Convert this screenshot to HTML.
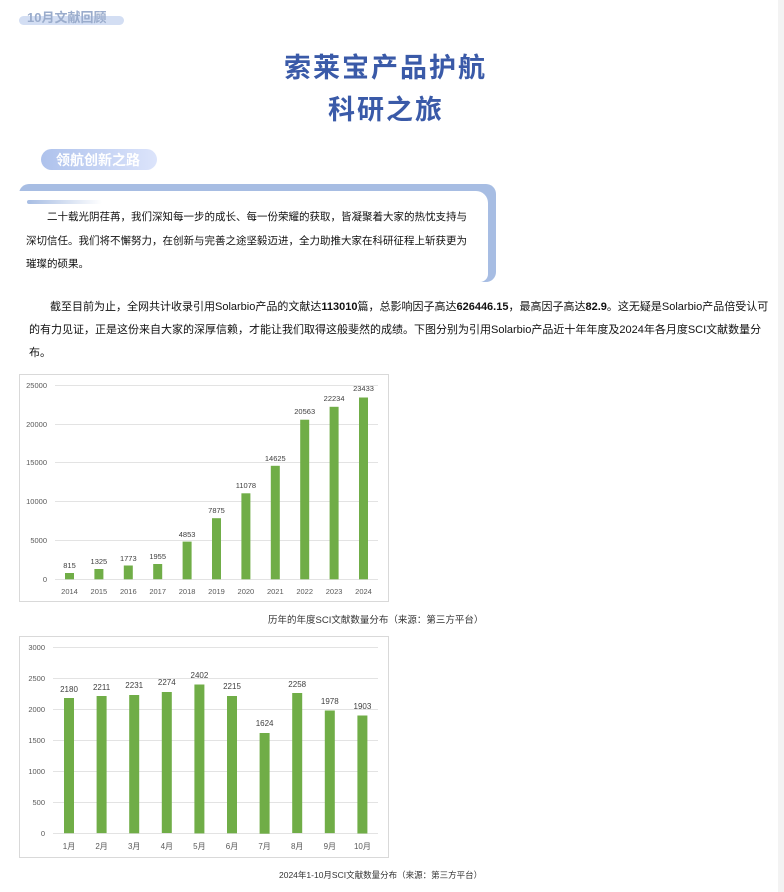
<!DOCTYPE html>
<html><head><meta charset="utf-8">
<style>
body{margin:0;width:784px;height:892px;background:#fff;position:relative;overflow:hidden;font-family:"Liberation Sans","Noto Sans CJK SC",sans-serif;}
.a{position:absolute;}
.p{font-size:11px;color:#111;line-height:23px;}
</style></head><body>
<div class="a" style="left:778px;top:0;width:6px;height:892px;background:#f3f3f3"></div>
<div class="a" style="left:19px;top:16px;width:105px;height:9px;border-radius:5px;background:#d3def3"></div>
<div class="a" style="left:27px;top:7px;font-size:13px;font-weight:bold;color:#9aaccc;">10月文献回顾</div>
<div class="a" style="left:284px;top:46px;font-size:27px;font-weight:bold;color:#3a5aa8;letter-spacing:2px">索莱宝产品护航</div>
<div class="a" style="left:328px;top:88px;font-size:27px;font-weight:bold;color:#3a5aa8;letter-spacing:2px">科研之旅</div>
<div class="a" style="left:41px;top:149px;width:116px;height:21px;border-radius:11px;background:linear-gradient(90deg,#aec2ec,#dce4fb)"></div>
<div class="a" style="left:56px;top:150px;font-size:14px;font-weight:bold;color:#fff">领航创新之路</div>
<div class="a" style="left:19px;top:184px;width:477px;height:98px;border-radius:10px;background:#a7bde3"></div>
<div class="a" style="left:19px;top:191px;width:469px;height:91px;border-radius:0 12px 8px 8px;background:#fff"></div>
<div class="a" style="left:27px;top:200px;width:75px;height:4px;border-radius:2px;background:linear-gradient(90deg,#a7bde3,#fff)"></div>
<div class="a p" style="left:26px;top:206px;width:446px;text-indent:21px;font-size:10.5px;line-height:23.5px">二十载光阴荏苒，我们深知每一步的成长、每一份荣耀的获取，皆凝聚着大家的热忱支持与深切信任。我们将不懈努力，在创新与完善之途坚毅迈进，全力助推大家在科研征程上斩获更为璀璨的硕果。</div>
<div class="a p" style="left:29px;top:296px;width:740px;text-indent:21px;font-size:11px">截至目前为止，全网共计收录引用Solarbio产品的文献达<b>113010</b>篇，总影响因子高达<b>626446.15</b>，最高因子高达<b>82.9</b>。这无疑是Solarbio产品倍受认可的有力见证，正是这份来自大家的深厚信赖，才能让我们取得这般斐然的成绩。下图分别为引用Solarbio产品近十年年度及2024年各月度SCI文献数量分布。</div>

<svg class="a" style="left:0;top:0" width="784" height="892" font-family="Liberation Sans, Noto Sans CJK SC, sans-serif">
<rect x="19.5" y="374.5" width="369" height="227" fill="#fff" stroke="#d9d9d9"/>
<g stroke="#e3e3e3" stroke-width="1">
<line x1="55" x2="378" y1="385.5" y2="385.5"/><line x1="55" x2="378" y1="424.5" y2="424.5"/><line x1="55" x2="378" y1="462.5" y2="462.5"/><line x1="55" x2="378" y1="501.5" y2="501.5"/><line x1="55" x2="378" y1="540.5" y2="540.5"/><line x1="55" x2="378" y1="579.5" y2="579.5"/>
</g>
<g font-size="7.5" fill="#595959" text-anchor="end">
<text x="47" y="388">25000</text><text x="47" y="427">20000</text><text x="47" y="465">15000</text><text x="47" y="504">10000</text><text x="47" y="543">5000</text><text x="47" y="582">0</text>
</g>
<g fill="#70ad47">
<rect x="65" y="573" width="9" height="6.3"/><rect x="94.4" y="569" width="9" height="10.3"/><rect x="123.8" y="565.5" width="9" height="13.8"/><rect x="153.2" y="564" width="9" height="15.2"/><rect x="182.6" y="541.6" width="9" height="37.7"/><rect x="212" y="518.2" width="9" height="61.1"/><rect x="241.4" y="493.3" width="9" height="86"/><rect x="270.8" y="465.8" width="9" height="113.5"/><rect x="300.2" y="419.7" width="9" height="159.6"/><rect x="329.6" y="406.8" width="9" height="172.5"/><rect x="359" y="397.5" width="9" height="181.8"/>
</g>
<g font-size="7.5" fill="#404040" text-anchor="middle">
<text x="69.5" y="568">815</text><text x="98.9" y="564">1325</text><text x="128.3" y="561">1773</text><text x="157.7" y="559">1955</text><text x="187.1" y="537">4853</text><text x="216.5" y="513">7875</text><text x="245.9" y="488">11078</text><text x="275.3" y="461">14625</text><text x="304.7" y="414">20563</text><text x="334.1" y="401">22234</text><text x="363.5" y="391">23433</text>
</g>
<g font-size="7.5" fill="#595959" text-anchor="middle">
<text x="69.5" y="594">2014</text><text x="98.9" y="594">2015</text><text x="128.3" y="594">2016</text><text x="157.7" y="594">2017</text><text x="187.1" y="594">2018</text><text x="216.5" y="594">2019</text><text x="245.9" y="594">2020</text><text x="275.3" y="594">2021</text><text x="304.7" y="594">2022</text><text x="334.1" y="594">2023</text><text x="363.5" y="594">2024</text>
</g>
<text x="268" y="623" font-size="9.5" fill="#333">历年的年度SCI文献数量分布（来源：第三方平台）</text>

<rect x="19.5" y="636.5" width="369" height="221" fill="#fff" stroke="#d9d9d9"/>
<g stroke="#e3e3e3">
<line x1="53" x2="378" y1="647.5" y2="647.5"/><line x1="53" x2="378" y1="678.5" y2="678.5"/><line x1="53" x2="378" y1="709.5" y2="709.5"/><line x1="53" x2="378" y1="740.5" y2="740.5"/><line x1="53" x2="378" y1="771.5" y2="771.5"/><line x1="53" x2="378" y1="802.5" y2="802.5"/><line x1="53" x2="378" y1="833.5" y2="833.5"/>
</g>
<g font-size="7.5" fill="#595959" text-anchor="end">
<text x="45" y="650">3000</text><text x="45" y="681">2500</text><text x="45" y="712">2000</text><text x="45" y="743">1500</text><text x="45" y="774">1000</text><text x="45" y="805">500</text><text x="45" y="836">0</text>
</g>
<g fill="#70ad47">
<rect x="64" y="698" width="10" height="135.2"/><rect x="96.6" y="696" width="10" height="137.1"/><rect x="129.2" y="695" width="10" height="138.3"/><rect x="161.8" y="692" width="10" height="141"/><rect x="194.4" y="684.5" width="10" height="148.9"/><rect x="227" y="696" width="10" height="137.3"/><rect x="259.6" y="733" width="10" height="100.7"/><rect x="292.2" y="693" width="10" height="140"/><rect x="324.8" y="710.5" width="10" height="122.6"/><rect x="357.4" y="715.5" width="10" height="118"/>
</g>
<g font-size="8" fill="#404040" text-anchor="middle">
<text x="69" y="692">2180</text><text x="101.6" y="690">2211</text><text x="134.2" y="688">2231</text><text x="166.8" y="685">2274</text><text x="199.4" y="678">2402</text><text x="232" y="689">2215</text><text x="264.6" y="726">1624</text><text x="297.2" y="687">2258</text><text x="329.8" y="704">1978</text><text x="362.4" y="709">1903</text>
</g>
<g font-size="8" fill="#595959" text-anchor="middle">
<text x="69" y="849">1月</text><text x="101.6" y="849">2月</text><text x="134.2" y="849">3月</text><text x="166.8" y="849">4月</text><text x="199.4" y="849">5月</text><text x="232" y="849">6月</text><text x="264.6" y="849">7月</text><text x="297.2" y="849">8月</text><text x="329.8" y="849">9月</text><text x="362.4" y="849">10月</text>
</g>
<text x="279" y="878" font-size="8.5" fill="#333">2024年1-10月SCI文献数量分布（来源：第三方平台）</text>
</svg>
</body></html>
